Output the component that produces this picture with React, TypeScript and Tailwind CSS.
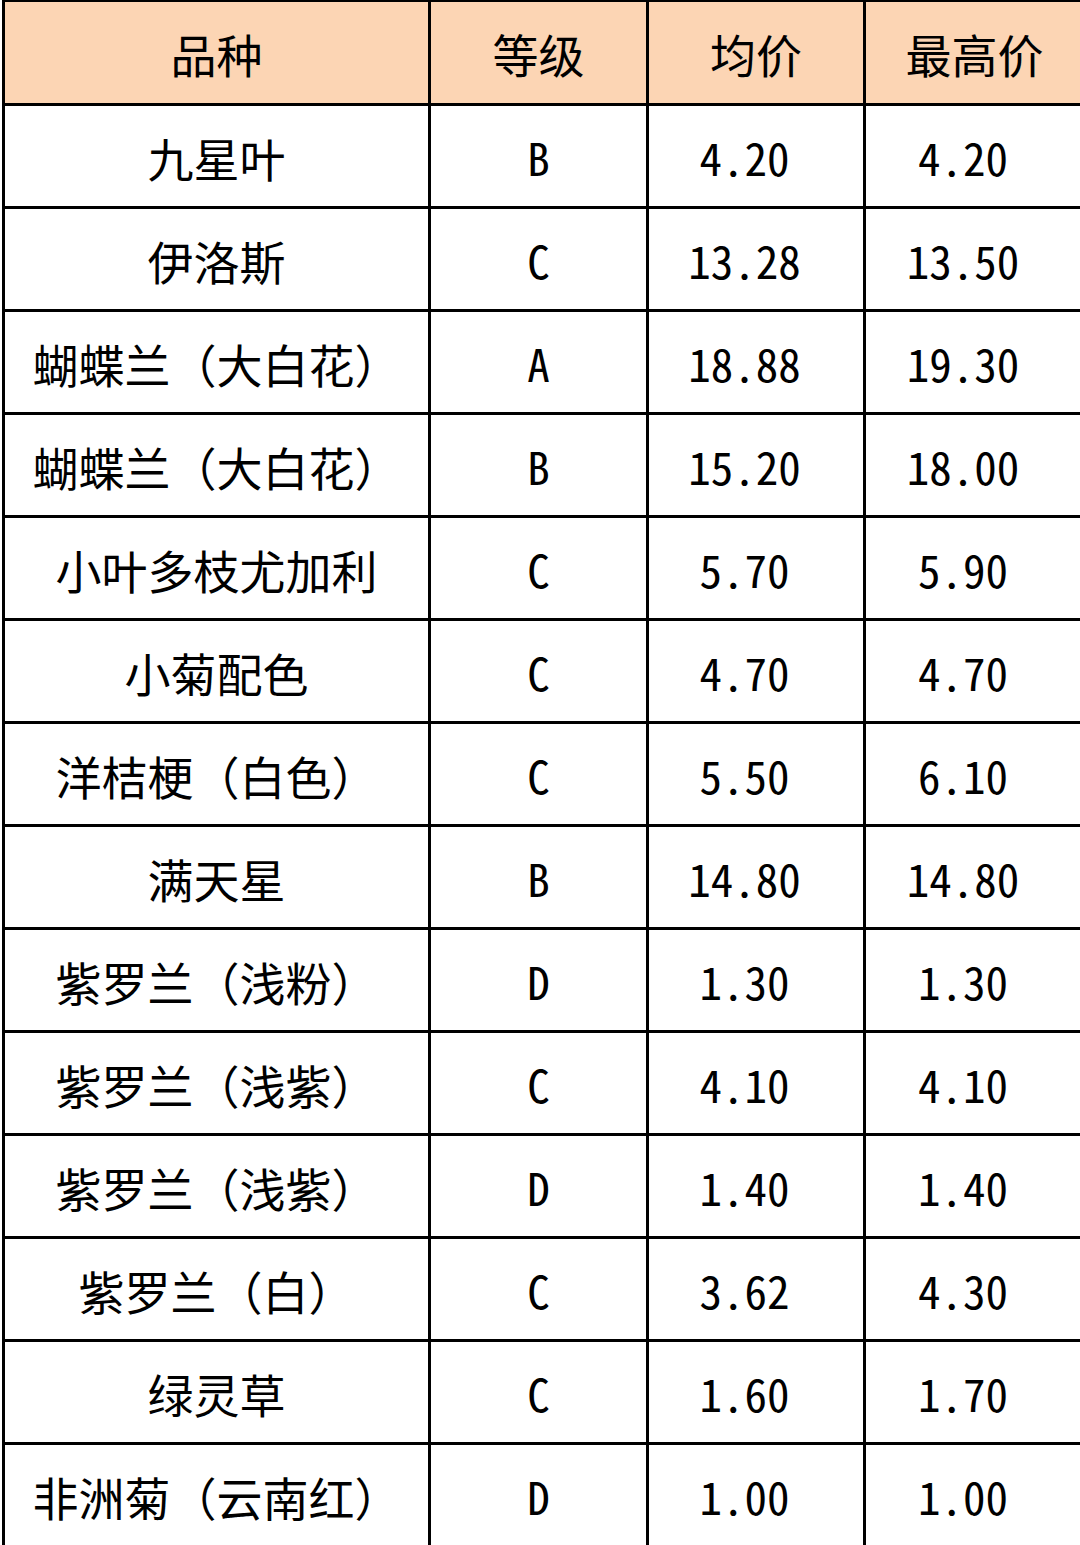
import React from 'react'

type Row = {
    name: string,
    grade: string,
    avg: string,
    max: string
}

const rows: Row[] = [
    { name: '九星叶', grade: 'B', avg: '4.20', max: '4.20' },
    { name: '伊洛斯', grade: 'C', avg: '13.28', max: '13.50' },
    { name: '蝴蝶兰（大白花）', grade: 'A', avg: '18.88', max: '19.30' },
    { name: '蝴蝶兰（大白花）', grade: 'B', avg: '15.20', max: '18.00' },
    { name: '小叶多枝尤加利', grade: 'C', avg: '5.70', max: '5.90' },
    { name: '小菊配色', grade: 'C', avg: '4.70', max: '4.70' },
    { name: '洋桔梗（白色）', grade: 'C', avg: '5.50', max: '6.10' },
    { name: '满天星', grade: 'B', avg: '14.80', max: '14.80' },
    { name: '紫罗兰（浅粉）', grade: 'D', avg: '1.30', max: '1.30' },
    { name: '紫罗兰（浅紫）', grade: 'C', avg: '4.10', max: '4.10' },
    { name: '紫罗兰（浅紫）', grade: 'D', avg: '1.40', max: '1.40' },
    { name: '紫罗兰（白）', grade: 'C', avg: '3.62', max: '4.30' },
    { name: '绿灵草', grade: 'C', avg: '1.60', max: '1.70' },
    { name: '非洲菊（云南红）', grade: 'D', avg: '1.00', max: '1.00' },
]

const headers = ['品种', '等级', '均价', '最高价']

const cellCls = 'flex items-center justify-center border-r-[3px] border-b-[3px] border-black whitespace-nowrap'
// half-width latin like the sheet's font
const latinCls = "[font-feature-settings:'hwid'] text-[45px]"

const App = () => {
    return (
        <div className="w-[1080px] h-[1545px] overflow-hidden bg-white pl-[2px]">
            <div
                className="grid grid-cols-[426px_218px_217px_220px] grid-rows-[104px_repeat(14,103px)] border-l-[3px] border-t-[2px] border-black text-[46px] leading-none text-black [font-family:'Noto_Sans_CJK_SC',sans-serif]"
            >
                {headers.map((h) => (
                    <div key={h} className={`${cellCls} bg-[#fcd5b4]`}>{h}</div>
                ))}
                {rows.map((r, i) => (
                    <React.Fragment key={i}>
                        <div className={`${cellCls} pt-[1px]`}>{r.name}</div>
                        <div className={`${cellCls} ${latinCls}`}>{r.grade}</div>
                        <div className={`${cellCls} ${latinCls} pr-[23px]`}>{r.avg}</div>
                        <div className={`${cellCls} ${latinCls} pr-[23px]`}>{r.max}</div>
                    </React.Fragment>
                ))}
            </div>
        </div>
    )
}

export default App
